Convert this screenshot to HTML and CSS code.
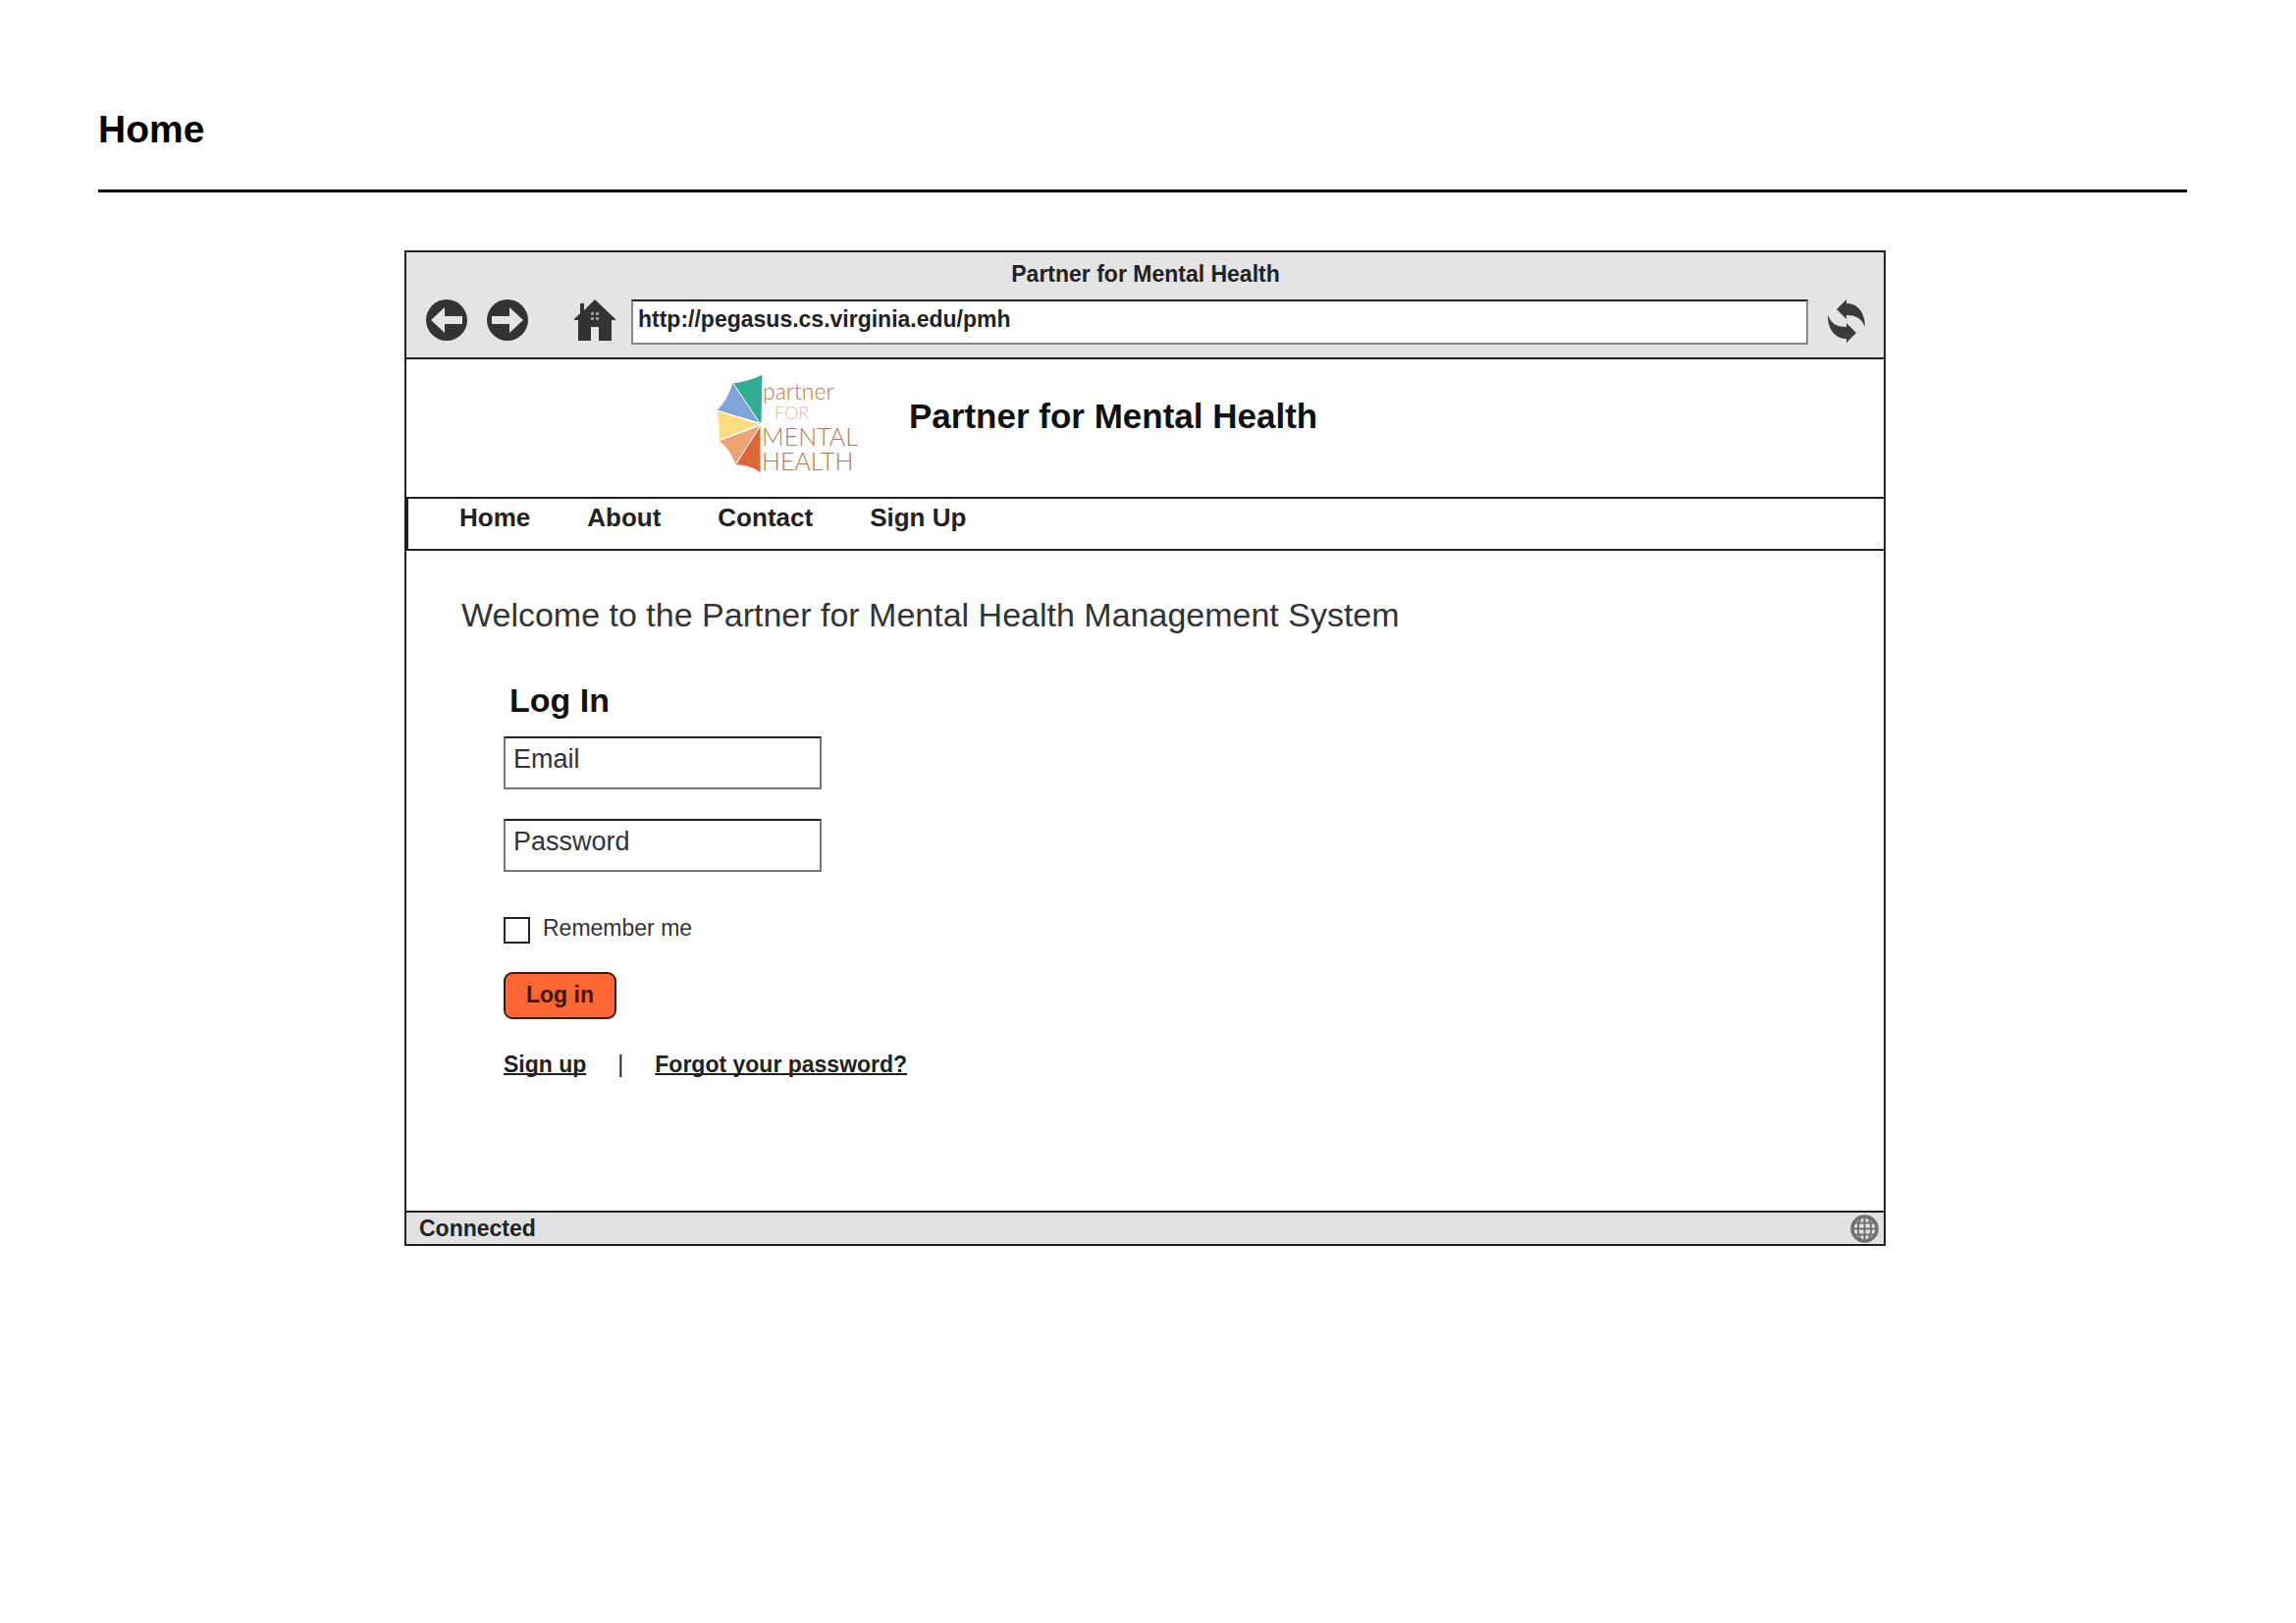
FILE: index.html
```html
<!DOCTYPE html>
<html lang="en">
<head>
<meta charset="utf-8">
<meta name="viewport" content="width=device-width, initial-scale=1">
<title>Home</title>
<link rel="stylesheet" href="styles.css">
</head>
<body>
<div class="page">
  <header class="page-header"><h1 class="page-title">Home</h1></header>
  <section class="browser">
    <div class="chrome">
      <div class="chrome-title">Partner for Mental Health</div>
      <div class="toolbar">
        <button class="icon-button" type="button" aria-label="Back">
          <svg width="42" height="42" viewBox="0 0 42 42"><circle cx="21" cy="21" r="21" fill="#333"/><path d="M5 21 19 8v9h18v8H19v9z" fill="#e4e4e4"/></svg>
        </button>
        <button class="icon-button" type="button" aria-label="Forward">
          <svg width="42" height="42" viewBox="0 0 42 42"><circle cx="21" cy="21" r="21" fill="#333"/><path d="M37 21 23 8v9H5v8h18v9z" fill="#e4e4e4"/></svg>
        </button>
        <button class="icon-button home-button" type="button" aria-label="Home page">
          <svg width="42" height="42" viewBox="0 0 42 42"><path d="M21 0 42 20v1h-4v21H25V28h-8v14H4V21H0v-1l6-6V4h4v7z" fill="#333"/><path d="M17 13h3v3h-3zM22 13h3v3h-3zM17 18h3v3h-3zM22 18h3v3h-3z" fill="#999"/></svg>
        </button>
        <input class="address" type="text" aria-label="Address" value="http://pegasus.cs.virginia.edu/pmh">
        <button class="icon-button" type="button" aria-label="Reload">
          <svg width="38" height="44" viewBox="0 0 38 44"><path id="arrow" d="M9 10 19 0V4C31 4 38 14 38 28 34 19 29 16 19 16V20z" fill="#3a3a3a"/><use href="#arrow" transform="rotate(180 19 22)"/></svg>
        </button>
      </div>
    </div>
    <div class="banner">
      <svg class="logo" width="152" height="104" viewBox="0 0 152 104" role="img" aria-label="Partner for Mental Health logo">
        <g stroke="#fff" stroke-width="1">
          <path d="M46 51 18 10Q35 8 49 1L48 50z" fill="#2fae92"/>
          <path d="M46 51 2 38Q14 26 18 9z" fill="#7ea4d8"/>
          <path d="M46 52 4 69Q5 52 2 38z" fill="#fbdc80"/>
          <path d="M47 53 21 94Q17 79 4 69z" fill="#f0a277"/>
          <path d="M47 53V102Q35 93 21 94z" fill="#dc683a"/>
        </g>
        <g class="logo-text">
          <text x="49" y="27" font-size="23">partner</text>
          <text class="logo-faint" x="61" y="47" font-size="18">FOR</text>
          <text x="48" y="74" font-size="25">MENTAL</text>
          <text x="48" y="99" font-size="25">HEALTH</text>
        </g>
      </svg>
      <h2 class="banner-title">Partner for Mental Health</h2>
    </div>
    <nav class="nav">
      <a href="#">Home</a>
      <a href="#">About</a>
      <a href="#">Contact</a>
      <a href="#">Sign Up</a>
    </nav>
    <main class="content">
      <p class="welcome">Welcome to the Partner for Mental Health Management System</p>
      <form class="login">
        <h3 class="login-title">Log In</h3>
        <input class="field" type="text" aria-label="Email" placeholder="Email">
        <input class="field" type="password" aria-label="Password" placeholder="Password">
        <div class="remember">
          <input class="checkbox" type="checkbox" id="remember">
          <label for="remember">Remember me</label>
        </div>
        <button class="submit" type="button">Log in</button>
        <div class="links">
          <a href="#">Sign up</a>
          <span>|</span>
          <a href="#">Forgot your password?</a>
        </div>
      </form>
    </main>
    <footer class="status">
      <span>Connected</span>
      <svg width="29" height="29" viewBox="0 0 29 29" aria-hidden="true"><circle cx="14.500" cy="14.500" r="12.500" fill="#e2e2e2" stroke="#707070" stroke-width="3.500"/><path d="M14.500 2v25M2 14.500h25M4 8.500h21M4 20.500h21M10.500 3Q5 14.500 10.500 26M18.500 3Q24 14.500 18.500 26" fill="none" stroke="#707070" stroke-width="2"/></svg>
    </footer>
  </section>
</div>
</body>
</html>
```
FILE: styles.css
```css
* {
  box-sizing: border-box;
}

body {
  margin: 0;
  background: #fff;
  color: #222;
  font-family: "Liberation Sans", Arial, sans-serif;
  font-size: 23px;
  line-height: 28px;
}

h1, h2, h3, p {
  margin: 0;
}

input, button {
  margin: 0;
  font: inherit;
  color: inherit;
}

svg {
  display: block;
}

.page {
  padding: 110px 111px 60px 100px;
}

.page-header {
  padding-bottom: 39px;
  border-bottom: 3px solid #000;
}

.page-title {
  color: #000;
  font-size: 39px;
  line-height: 44px;
}

.browser {
  margin: 59px 307px 0 312px;
  border: 2px solid #222;
}

.chrome {
  padding: 8px 19px 13px 20px;
  border-bottom: 2px solid #222;
  background: #e4e4e4;
}

.chrome-title {
  font-weight: bold;
  text-align: center;
}

.toolbar {
  display: flex;
  align-items: flex-start;
  gap: 20px;
  margin-top: 12px;
}

.icon-button {
  padding: 0;
  border: 0;
  background: none;
}

.home-button {
  margin-left: 27px;
}

.address {
  flex: 1;
  min-width: 0;
  height: 46px;
  margin-left: -4px;
  padding: 0 5px 5px;
  border: 2px solid #888;
  border-top-color: #222;
  background: #fff;
  font-weight: bold;
}

.banner {
  display: flex;
  gap: 46px;
  height: 140px;
  padding: 14px 20px 0 314px;
}

.logo {
  flex: none;
}

.logo-text {
  fill: #bd7648;
  font-family: Lato, sans-serif;
  font-weight: 300;
}

.logo-faint {
  fill: #dfb9a0;
}

.banner-title {
  padding-top: 24px;
  color: #111;
  font-size: 35px;
  line-height: 40px;
}

.nav {
  display: flex;
  gap: 58px;
  padding: 3px 52px 16px;
  border: solid #222;
  border-width: 2px 0 2px 2px;
  font-size: 26px;
  font-weight: bold;
  line-height: 32px;
}

.nav a {
  color: inherit;
  text-decoration: none;
}

.content {
  padding: 45px 56px 135px;
}

.welcome {
  color: #333;
  font-size: 34px;
  line-height: 40px;
}

.login {
  display: flex;
  flex-direction: column;
  align-items: flex-start;
  margin: 47px 0 0 43px;
}

.login-title {
  margin: 0 0 17px 6px;
  color: #111;
  font-size: 34px;
  line-height: 40px;
}

.field {
  width: 324px;
  max-width: 100%;
  height: 54px;
  padding: 0 8px 8px;
  border: 2px solid #777;
  border-top-color: #222;
  background: #fff;
  font-size: 27px;
}

.field + .field {
  margin-top: 30px;
}

.field::placeholder {
  color: #333;
  opacity: 1;
}

.remember {
  display: flex;
  align-items: center;
  gap: 13px;
  margin-top: 43px;
  color: #333;
}

.remember label {
  padding-bottom: 4px;
}

.checkbox {
  width: 27px;
  height: 27px;
  appearance: none;
  border: 2px solid #222;
  background: #fff;
}

.checkbox:checked {
  background: #222;
}

.submit {
  height: 48px;
  margin-top: 27px;
  padding: 0 21px 3px;
  border: 2px solid #401708;
  border-radius: 9px;
  background: #ff6633;
  color: #401708;
  font-weight: bold;
}

.links {
  display: flex;
  flex-wrap: wrap;
  gap: 32px;
  margin-top: 32px;
}

.links a {
  color: inherit;
  font-weight: bold;
  text-decoration-thickness: 2px;
  text-decoration-skip-ink: none;
}

.status {
  display: flex;
  align-items: center;
  justify-content: space-between;
  height: 34px;
  padding: 0 5px 0 13px;
  border-top: 2px solid #222;
  background: #e1e1e1;
  font-weight: bold;
}
```
